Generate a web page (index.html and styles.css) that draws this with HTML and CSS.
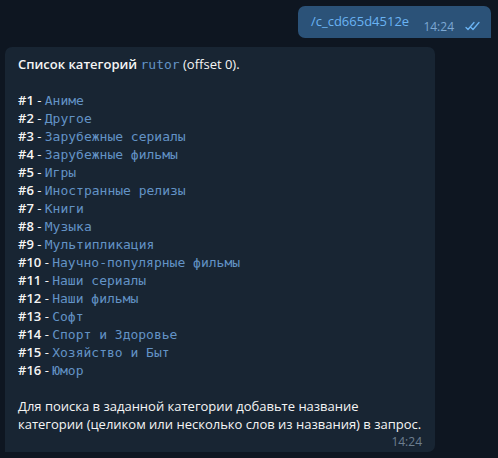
FILE: index.html
```html
<!DOCTYPE html>
<html>
<head>
<meta charset="utf-8">
<link rel="stylesheet" href="styles.css">
</head>
<body>
<div class="chat">
  <div class="row out">
    <div class="bubble bubble-out">
      <span class="cmd">/c_cd665d4512e</span>
      <span class="meta-out">
        <span class="time-out">14:24</span>
        <svg class="checks" width="18" height="10" viewBox="0 0 18 10"><path d="M1 6.5 L3 8.5 L9 1.5 M6 6.5 L8 8.5 L14 1.5" fill="none" stroke="#6ab3f3" stroke-width="1.3" stroke-linecap="round" stroke-linejoin="round"/></svg>
      </span>
    </div>
  </div>
  <div class="row in">
    <div class="bubble bubble-in">
      <p class="line"><b>Список категорий</b> <code>rutor</code> (offset 0).</p>
      <p class="line">&nbsp;</p>
      <p class="line"><b>#1</b> - <code>Аниме</code></p>
      <p class="line"><b>#2</b> - <code>Другое</code></p>
      <p class="line"><b>#3</b> - <code>Зарубежные сериалы</code></p>
      <p class="line"><b>#4</b> - <code>Зарубежные фильмы</code></p>
      <p class="line"><b>#5</b> - <code>Игры</code></p>
      <p class="line"><b>#6</b> - <code>Иностранные релизы</code></p>
      <p class="line"><b>#7</b> - <code>Книги</code></p>
      <p class="line"><b>#8</b> - <code>Музыка</code></p>
      <p class="line"><b>#9</b> - <code>Мультипликация</code></p>
      <p class="line"><b>#10</b> - <code>Научно-популярные фильмы</code></p>
      <p class="line"><b>#11</b> - <code>Наши сериалы</code></p>
      <p class="line"><b>#12</b> - <code>Наши фильмы</code></p>
      <p class="line"><b>#13</b> - <code>Софт</code></p>
      <p class="line"><b>#14</b> - <code>Спорт и Здоровье</code></p>
      <p class="line"><b>#15</b> - <code>Хозяйство и Быт</code></p>
      <p class="line"><b>#16</b> - <code>Юмор</code></p>
      <p class="line">&nbsp;</p>
      <p class="line">Для поиска в заданной категории добавьте название<br>категории (целиком или несколько слов из названия) в запрос.</p>
      <div class="time-in">14:24</div>
    </div>
  </div>
</div>
</body>
</html>
```

FILE: styles.css
```css
html, body {
  margin: 0;
  padding: 0;
  background: #0e1621;
}
body {
  font-family: "Open Sans", "Noto Sans", sans-serif;
  font-size: 13px;
  color: #f5f5f5;
  width: 498px;
  height: 458px;
  overflow: hidden;
}
.chat {
  display: flex;
  flex-direction: column;
  padding: 6px 7px 0 5px;
  gap: 9px;
}
.row {
  display: flex;
}
.row.out {
  justify-content: flex-end;
}
.bubble {
  border-radius: 7px;
}
.bubble-out {
  background: #2b5278;
  border-bottom-right-radius: 0;
  height: 32px;
  width: 193px;
  box-sizing: border-box;
  display: flex;
  align-items: center;
  padding: 0 8px 0 13px;
}
.cmd {
  color: #6ab3f3;
  font-size: 13px;
  margin-top: -2px;
}
.meta-out {
  margin-left: auto;
  display: flex;
  align-items: center;
  margin-top: 8px;
}
.time-out {
  color: #7da8d3;
  font-size: 12px;
  margin-right: 11px;
}
.checks {
  display: block;
}
.bubble-in {
  background: #182533;
  width: 430px;
  height: 405px;
  box-sizing: border-box;
  padding: 8px 13px 0 13px;
  border-bottom-left-radius: 0;
}
.line {
  margin: 0;
  height: 18px;
  line-height: 18px;
  white-space: nowrap;
}
.line:last-of-type {
  height: auto;
}
b {
  font-weight: 600;
}
code {
  font-family: "DejaVu Sans Mono", monospace;
  font-size: 13px;
  line-height: 1;
  color: #6393c6;
}
.time-in {
  text-align: right;
  color: #6d7f8f;
  font-size: 12px;
  line-height: 16px;
  margin-top: 1px;
}
```
